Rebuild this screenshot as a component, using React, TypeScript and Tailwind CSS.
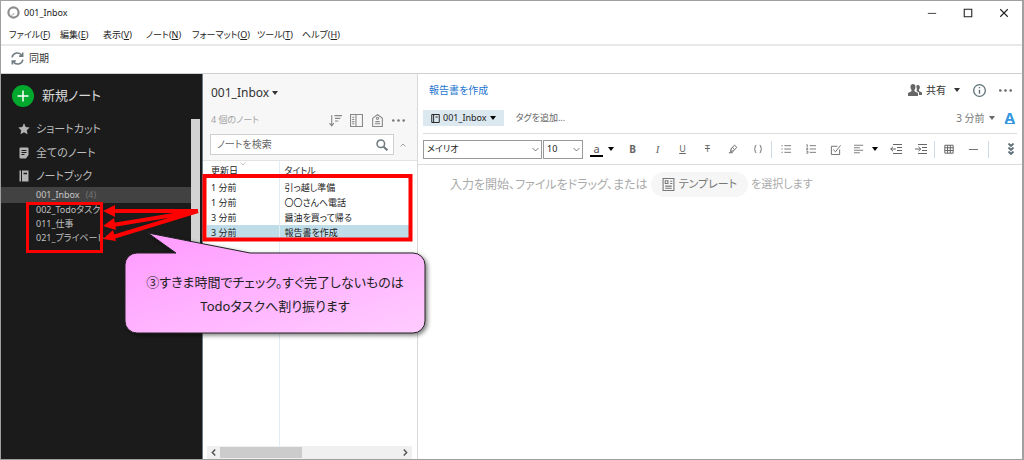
import type { ReactNode } from "react";

const menus = [
  { label: "ファイル", hotkey: "F", width: "w-[51px]" },
  { label: "編集", hotkey: "E", width: "w-[43px]" },
  { label: "表示", hotkey: "V", width: "w-[43px]" },
  { label: "ノート", hotkey: "N", width: "w-[46px]" },
  { label: "フォーマット", hotkey: "O", width: "w-[65px]" },
  { label: "ツール", hotkey: "T", width: "w-[45px]" },
  { label: "ヘルプ", hotkey: "H", width: "w-[45px]" },
];

const notes = [
  { updated: "1 分前", title: "引っ越し準備" },
  { updated: "1 分前", title: "〇〇さんへ電話" },
  { updated: "3 分前", title: "醤油を買って帰る" },
  { updated: "3 分前", title: "報告書を作成", selected: true },
];

const notebooks = ["002_Todoタスク", "011_仕事", "021_プライベート"];

function Caret({ className = "text-[#333]" }: { className?: string }) {
  return (
    <svg width="6" height="4" viewBox="0 0 6 4" className={`shrink-0 ${className}`} fill="currentColor">
      <path d="M0 0h6L3 4z" />
    </svg>
  );
}

interface IconProps {
  size?: number;
  stroke?: number;
  className?: string;
  children: ReactNode;
}

function Icon({ size = 12, stroke = 1, className = "", children }: IconProps) {
  return (
    <svg
      width={size}
      height={size}
      viewBox="0 0 12 12"
      fill="none"
      stroke="currentColor"
      strokeWidth={stroke}
      className={`shrink-0 ${className}`}
    >
      {children}
    </svg>
  );
}

function ToolButton({ label, children }: { label: string; children: ReactNode }) {
  return (
    <button aria-label={label} className="flex h-5 w-[25px] shrink-0 items-center justify-center text-[#666]">
      {children}
    </button>
  );
}

function Separator() {
  return <span className="h-[17px] w-px shrink-0 bg-[#cddbe8]" />;
}

function TitleBar() {
  return (
    <header className="flex h-[23px] shrink-0 items-center pl-[6px] text-[#222]">
      <Icon size={13} stroke={2} className="text-[#8c8c8c]">
        <circle cx="6" cy="6" r="4.7" />
        <path d="M3 8.5c2 .5 3-.5 3.5-2" stroke="#bbb" strokeWidth="1" />
      </Icon>
      <h1 className="ml-1 text-[9px]">001_Inbox</h1>
      <div className="ml-auto flex">
        <button aria-label="最小化" className="flex w-9 items-center justify-center">
          <Icon size={10}><path d="M1 6.5h10" /></Icon>
        </button>
        <button aria-label="最大化" className="flex w-9 items-center justify-center">
          <Icon size={10} stroke={1.3}><path d="M1.5 1.5h9v9h-9z" /></Icon>
        </button>
        <button aria-label="閉じる" className="flex w-9 items-center justify-center">
          <Icon size={10} stroke={1.3}><path d="M1.5 1.5l9 9M10.5 1.5l-9 9" /></Icon>
        </button>
      </div>
    </header>
  );
}

function Sidebar() {
  return (
    <aside className="flex w-[202px] shrink-0 border-r border-[#6d7c88] bg-[#1b1b1b] text-[#bdbdbd]">
      <div className="flex min-w-0 flex-1 flex-col">
        <button className="flex h-[43px] items-center gap-2 pl-[11px] text-[13px] text-[#d8d8d8]">
          <span className="flex h-[22px] w-[22px] items-center justify-center rounded-full bg-[#00a82d] text-white">
            <Icon stroke={1.5}><path d="M6 .5v11M.5 6h11" /></Icon>
          </span>
          新規ノート
        </button>
        <nav className="flex flex-col text-[11px]">
          <a href="#shortcuts" className="flex h-6 items-center gap-[6px] pl-[17px]">
            <Icon className="text-[#b5b5b5]">
              <path d="M6 .3l1.700 3.600 4 .5-2.900 2.800.7 4L6 9.300l-3.500 1.900.7-4L.3 4.400l4-.5z" fill="currentColor" stroke="none" />
            </Icon>
            ショートカット
          </a>
          <a href="#notes" className="flex h-6 items-center gap-[6px] pl-[17px]">
            <Icon className="text-[#b5b5b5]">
              <path d="M2.5.5h7a1 1 0 011 1V8L8 11.5H2.5a1 1 0 01-1-1v-9a1 1 0 011-1z" fill="currentColor" stroke="none" />
              <path d="M3.5 3.5h5M3.5 5.5h5M3.5 7.5h3" stroke="#1b1b1b" />
            </Icon>
            全てのノート
          </a>
          <a href="#notebooks" className="flex h-[22px] items-center gap-[6px] pl-[17px]">
            <Icon className="text-[#b5b5b5]">
              <path d="M1.500.5H3v11H1.500zM4 .5h6.500v11H4z" fill="currentColor" stroke="none" />
              <path d="M5.500 3.500H9" stroke="#1b1b1b" strokeWidth="1.5" />
            </Icon>
            ノートブック
          </a>
          <a href="#inbox" className="flex h-4 items-center gap-[6px] bg-[#424242] pl-[35px] text-[9px] text-[#c8c8c8]">
            001_Inbox <span className="text-[#757575]">(4)</span>
          </a>
          {notebooks.map((name) => (
            <a key={name} href={`#${name}`} className="flex h-[14px] items-center pl-[35px] text-[9px] text-[#c0c0c0]">
              {name}
            </a>
          ))}
        </nav>
      </div>
      <div className="mt-[45px] mr-[2px] h-[190px] w-[9px] bg-[#d3d3d3]" />
    </aside>
  );
}

function NoteList() {
  return (
    <section className="flex w-[215px] shrink-0 flex-col border-r border-[#d8d8d8] bg-white">
      <div className="shrink-0 border-b border-[#e2e2e2] bg-[#f7f7f7] pb-[5px] pl-[7px]">
        <button className="flex h-[38px] items-center gap-[3px] pl-[1px] text-[12px] text-[#333]">
          001_Inbox <Caret />
        </button>
        <div className="flex h-[22px] items-start justify-between pr-[12px] pl-[1px] text-[#888]">
          <span className="text-[9px] leading-4 text-[#a3a3a3]">4 個のノート</span>
          <div className="flex h-4 items-center gap-2">
            <button aria-label="並べ替え">
              <Icon size={13}><path d="M2.500 1v10M.5 8.500l2 2.500 2-2.500M5 1.500h7M5.500 4h5M5.500 6.500h3" /></Icon>
            </button>
            <button aria-label="表示オプション">
              <Icon size={13}><path d="M.5.5h11v11H.5zM5.500.5v11M2 3h2M2 5h2M2 7h2M2 9h2" /></Icon>
            </button>
            <button aria-label="タグ">
              <Icon size={13}>
                <path d="M1.500 4L6 .5 10.500 4v7.500h-9zM4 7h4M3.500 9h5" />
                <circle cx="6" cy="4" r="1" />
              </Icon>
            </button>
            <button aria-label="その他">
              <Icon size={13} className="text-[#777]">
                <g fill="currentColor" stroke="none">
                  <circle cx="1.200" cy="6" r="1.200" />
                  <circle cx="6" cy="6" r="1.200" />
                  <circle cx="10.800" cy="6" r="1.200" />
                </g>
              </Icon>
            </button>
          </div>
        </div>
        <div className="flex h-[21px] items-center gap-[6px]">
          <label className="flex h-[21px] w-[184px] items-center border border-[#cfcfcf] bg-white pr-[5px] pl-[6px]">
            <input
              aria-label="ノートを検索"
              placeholder="ノートを検索"
              className="min-w-0 flex-1 bg-transparent text-[10px] outline-none placeholder:text-[#666]"
            />
            <Icon stroke={1.5} className="text-[#6f7b80]">
              <circle cx="4.800" cy="4.800" r="3.800" />
              <path d="M7.700 7.700l3.700 3.700" strokeWidth="2" />
            </Icon>
          </label>
          <button aria-label="閉じる" className="text-[#999]">
            <Icon size={6} stroke={1.8}><path d="M1 9l5-5 5 5" /></Icon>
          </button>
        </div>
      </div>

      <div className="flex min-h-0 flex-1 flex-col pl-1">
        <div className="relative flex-1">
          <table className="h-full w-[205px] table-fixed border-collapse text-left text-[9px] text-[#222]">
            <thead>
              <tr className="h-[19px] leading-[17px]">
                <th className="w-[72px] border-r border-[#e2eef5] pl-1 align-middle font-normal">
                  <span className="relative">
                    更新日
                    <Icon size={6} className="absolute -top-[3px] left-[29px] text-[#888]"><path d="M1 3l5 5 5-5" /></Icon>
                  </span>
                </th>
                <th className="pl-[5px] align-middle font-normal">タイトル</th>
              </tr>
            </thead>
            <tbody>
              {notes.map((note) => (
                <tr key={note.title} className={note.selected ? "h-[15px] bg-[#bfdde9] leading-[15px]" : "h-[15px] leading-[15px]"}>
                  <td className="border-r border-[#e2eef5] pl-1">{note.updated}</td>
                  <td className="pl-[5px] whitespace-nowrap">{note.title}</td>
                </tr>
              ))}
              <tr>
                <td className="border-r border-[#e2eef5]" />
                <td />
              </tr>
            </tbody>
          </table>
        </div>
        <div className="flex h-[13px] w-[205px] shrink-0 items-center bg-[#f0f0f0] text-[#555]">
          <button aria-label="左へ" className="flex w-[13px] justify-center">
            <Icon size={7} stroke={2.500}><path d="M9 1L4 6l5 5" /></Icon>
          </button>
          <span className="h-[11px] w-[82px] bg-[#cccccc]" />
          <button aria-label="右へ" className="ml-auto flex w-[13px] justify-center">
            <Icon size={7} stroke={2.500}><path d="M3 1l5 5-5 5" /></Icon>
          </button>
        </div>
      </div>
    </section>
  );
}

function SelectBox({ label, value, width }: { label: string; value: string; width: string }) {
  return (
    <span className={`relative flex h-[19px] shrink-0 items-center ${width}`}>
      <select
        aria-label={label}
        defaultValue={value}
        className="h-full w-full appearance-none border border-[#999] bg-white pl-[3px] text-[9px] text-[#222]"
      >
        <option>{value}</option>
      </select>
      <Icon size={7} stroke={1.500} className="pointer-events-none absolute right-[3px] text-[#666]">
        <path d="M1 3.500l5 5 5-5" />
      </Icon>
    </span>
  );
}

function FormatBar() {
  return (
    <div className="mx-[5px] flex h-[30px] shrink-0 items-center">
      <SelectBox label="フォント" value="メイリオ" width="w-[119px]" />
      <span className="w-px shrink-0" />
      <SelectBox label="サイズ" value="10" width="w-[40px]" />
      <button aria-label="文字の色" className="ml-[7px] flex w-[25px] shrink-0 items-center gap-[5px] text-[#555]">
        <span className="w-[13px] border-b-2 border-black text-center text-[11px] leading-[13px]">a</span>
        <Caret className="text-black" />
      </button>
      <span className="w-[5px] shrink-0" />
      <ToolButton label="太字"><b className="text-[10px]">B</b></ToolButton>
      <ToolButton label="斜体"><i className="font-['Liberation_Serif'] text-[11px]">I</i></ToolButton>
      <ToolButton label="下線"><u className="text-[9px]">U</u></ToolButton>
      <ToolButton label="取り消し線"><s className="text-[9px]">T</s></ToolButton>
      <ToolButton label="蛍光ペン">
        <Icon size={10} stroke={1.200}>
          <path d="M1 10.500h4l1-1.500M3 9l1-4 4-3.500L10.500 4 7 8l-4 1zM5.500 4.500l2 2" />
        </Icon>
      </ToolButton>
      <ToolButton label="コードブロック">
        <Icon size={10} stroke={1.100}>
          <path d="M4 1.500c-3 0 0 4-2.500 4.500C4 6.500 1 10.500 4 10.500M8 1.500c3 0 0 4 2.500 4.500C8 6.500 11 10.500 8 10.500" />
        </Icon>
      </ToolButton>
      <span className="w-px shrink-0" />
      <Separator />
      <span className="w-px shrink-0" />
      <ToolButton label="箇条書き">
        <Icon size={10}><path d="M4 2h8M4 6h8M4 10h8M.5 2h1.500M.5 6h1.500M.5 10h1.500" /></Icon>
      </ToolButton>
      <ToolButton label="番号付きリスト">
        <Icon size={10}><path d="M4.500 2H12M4.500 6H12M4.500 10H12M.5.800h1v3M.3 5h1.700v1.500H.3M.3 8.500h2v2.500h-2" /></Icon>
      </ToolButton>
      <ToolButton label="チェックボックス">
        <Icon size={11}><path d="M10.500 6v5.500h-9v-9H8M3.500 6l2.500 2.500 5.500-7" /></Icon>
      </ToolButton>
      <button aria-label="配置" className="flex w-[35px] shrink-0 items-center justify-center gap-2 text-[#666]">
        <Icon size={10}><path d="M0 1.500h11M0 4.500h7M0 7.500h11M0 10.500h7" /></Icon>
        <Caret className="text-black" />
      </button>
      <ToolButton label="インデントを減らす">
        <Icon><path d="M3 1.500h9M7 4.500h5M7 7.500h5M3 10.500h9M6 6H.7M3 3.800L.7 6 3 8.200" /></Icon>
      </ToolButton>
      <ToolButton label="インデントを増やす">
        <Icon><path d="M3 1.500h9M7 4.500h5M7 7.500h5M3 10.500h9M0 6h5.500M3.500 3.800L5.800 6 3.500 8.200" /></Icon>
      </ToolButton>
      <span className="w-px shrink-0" />
      <Separator />
      <span className="w-px shrink-0" />
      <ToolButton label="表">
        <Icon size={10} stroke={1.200}><path d="M1 1.500h10v9.500H1zM1 4.500h10M1 7.800h10M4.300 1.500v9.500M7.600 1.500v9.500" /></Icon>
      </ToolButton>
      <ToolButton label="区切り線">
        <Icon size={11}><path d="M1 6h10" /></Icon>
      </ToolButton>
      <span className="w-[2px] shrink-0" />
      <Separator />
      <button aria-label="その他の書式" className="ml-auto text-[#607078]">
        <Icon stroke={1.800}><path d="M3.500.5L6 3 8.500.5M3.500 4.500L6 7l2.500-2.500M3.500 8.500L6 11l2.500-2.500" /></Icon>
      </button>
    </div>
  );
}

function Editor() {
  return (
    <main className="flex min-w-0 flex-1 flex-col bg-white">
      <div className="flex h-8 shrink-0 items-center pr-[10px] pl-[11px]">
        <h2 className="text-[10px] text-[#1f78d1]">報告書を作成</h2>
        <button className="ml-auto flex items-center text-[10px] text-[#333]">
          <svg width="14" height="12" viewBox="0 0 14 12" fill="#666" className="mr-[4px]">
            <path d="M10 1c2 0 2.500 3 1 4.500v1.500l3 1.500V11h-3V8.500L8.500 7c1-2-.5-4 0-5.500.5-.5 1-.5 1.500-.5z" />
            <path d="M5 0c3 0 3 4 1.500 5.800v1.500L10 9v3H0V9l3.500-1.700V5.800C2 4 2 0 5 0z" />
          </svg>
          共有
          <span className="w-2" />
          <Caret />
        </button>
        <button aria-label="ノート情報" className="ml-[13px] text-[#607078]">
          <Icon size={13} stroke={1.200}><circle cx="6" cy="6" r="5.400" /><path d="M6 5.200v3.800M6 2.800V4" strokeWidth="1.300" /></Icon>
        </button>
        <button aria-label="その他" className="ml-[13px] text-[#666]">
          <Icon size={13}>
            <g fill="currentColor" stroke="none">
              <circle cx="1.200" cy="6" r="1.200" />
              <circle cx="6" cy="6" r="1.200" />
              <circle cx="10.800" cy="6" r="1.200" />
            </g>
          </Icon>
        </button>
      </div>

      <div className="mx-[5px] flex h-7 shrink-0 items-center border-b border-[#dcdcdc] pb-[3px] text-[9px]">
        <button className="flex h-4 items-center gap-[3px] bg-[#dbe8ef] px-2 text-[#222]">
          <Icon size={9} stroke={1.300}><path d="M1 .7h10v10.600H1zM3.500.7v10.600M6 4h3" /></Icon>
          001_Inbox
          <Caret className="text-black" />
        </button>
        <input
          aria-label="タグを追加"
          placeholder="タグを追加..."
          className="ml-3 w-24 bg-transparent outline-none placeholder:text-[#666]"
        />
        <button className="ml-auto flex items-center gap-1 text-[10px] text-[#777]">
          3 分前 <Caret className="text-[#666]" />
        </button>
        <button aria-label="書式" className="mr-[2px] ml-[10px] border-b border-[#3597e0] text-[15px] leading-[11px] font-bold text-[#3597e0]">
          A
        </button>
      </div>

      <FormatBar />

      <div className="flex flex-1 items-start border-t border-[#dcdcdc] pt-[7px] pl-8 text-[12px] text-[#aaa]">
        <p className="flex h-[25px] items-center whitespace-nowrap">
          入力を開始、ファイルをドラッグ、または
          <button className="mx-[3px] flex h-[25px] items-center gap-1 rounded-full bg-[#f6f6f6] px-[11px] text-[11px] text-[#777]">
            <Icon size={13}>
              <path d="M1 .5h10v11H1zM3 9.500h6M3 7.500h6M7.500 3h2M7.500 5h2M3 2.500h2.500v2.500H3z" />
            </Icon>
            テンプレート
          </button>
          <span className="text-[11px]">を選択します</span>
        </p>
      </div>
    </main>
  );
}

function Annotations() {
  return (
    <div className="pointer-events-none absolute -top-px -left-px h-[360px] w-[450px]">
      <svg width="450" height="360" viewBox="0 0 450 360" className="absolute top-0 left-0">
        <defs>
          <linearGradient id="balloon" x1="0" y1="0" x2="1" y2="1">
            <stop offset="0" stopColor="#ff99ff" />
            <stop offset="1" stopColor="#ffccff" />
          </linearGradient>
          <filter id="shadow" x="-10%" y="-10%" width="120%" height="130%">
            <feDropShadow dx="2" dy="2" stdDeviation="2" floodColor="#000" floodOpacity="0.5" />
          </filter>
        </defs>
        <g fill="none" stroke="#ff0000">
          <path d="M27.500 203.500h74v48h-74z" strokeWidth="3" />
          <path d="M204.500 176h206v63.500h-206z" strokeWidth="4" />
          <path d="M198 211h-84M198 211l-85 14M198 211l-85 26" strokeWidth="4" />
        </g>
        <g fill="#ff0000">
          <path d="M103 211l12-6v12z" />
          <path d="M103 226l11-8 2 12z" />
          <path d="M103 239l10-9 3 11z" />
        </g>
        <path
          d="M137 253h39l-28-20 102 20h163a12 12 0 0112 12v56a12 12 0 01-12 12H137a12 12 0 01-12-12v-56a12 12 0 0112-12z"
          fill="url(#balloon)"
          stroke="#222"
          filter="url(#shadow)"
        />
      </svg>
      <p className="absolute top-[270px] left-[125px] w-[300px] text-center text-[13px] leading-6 text-[#222]">
        ③すきま時間でチェック。すぐ完了しないものは
        <br />
        Todoタスクへ割り振ります
      </p>
    </div>
  );
}

export default function App() {
  return (
    <div className="relative flex min-h-screen flex-col border border-r-2 border-[#a0a0a0] bg-white font-['Noto_Sans','Noto_Sans_CJK_JP',sans-serif] [font-feature-settings:'palt']">
      <TitleBar />
      <nav className="flex h-[20px] shrink-0 items-center pt-[2px] pl-2 text-[9px] text-[#222]">
        {menus.map((menu) => (
          <button key={menu.label} className={`text-left whitespace-nowrap ${menu.width}`}>
            {menu.label}(<u>{menu.hotkey}</u>)
          </button>
        ))}
      </nav>
      <div className="flex h-[30px] shrink-0 items-center border-t-2 border-b border-t-[#e8e8e8] border-b-[#cfcfcf] pb-[3px] pl-[10px]">
        <button className="flex items-center gap-[5px] text-[10px] text-[#333]">
          <Icon size={13} stroke={1.400} className="text-[#6f7b80]">
            <path d="M1 5a5 5 0 019-2M11 7a5 5 0 01-9 2M10.800.5v3.300H7.500M1.200 11.500V8.200h3.300" />
          </Icon>
          同期
        </button>
      </div>
      <div className="flex min-h-0 flex-1">
        <Sidebar />
        <NoteList />
        <Editor />
      </div>
      <Annotations />
    </div>
  );
}
